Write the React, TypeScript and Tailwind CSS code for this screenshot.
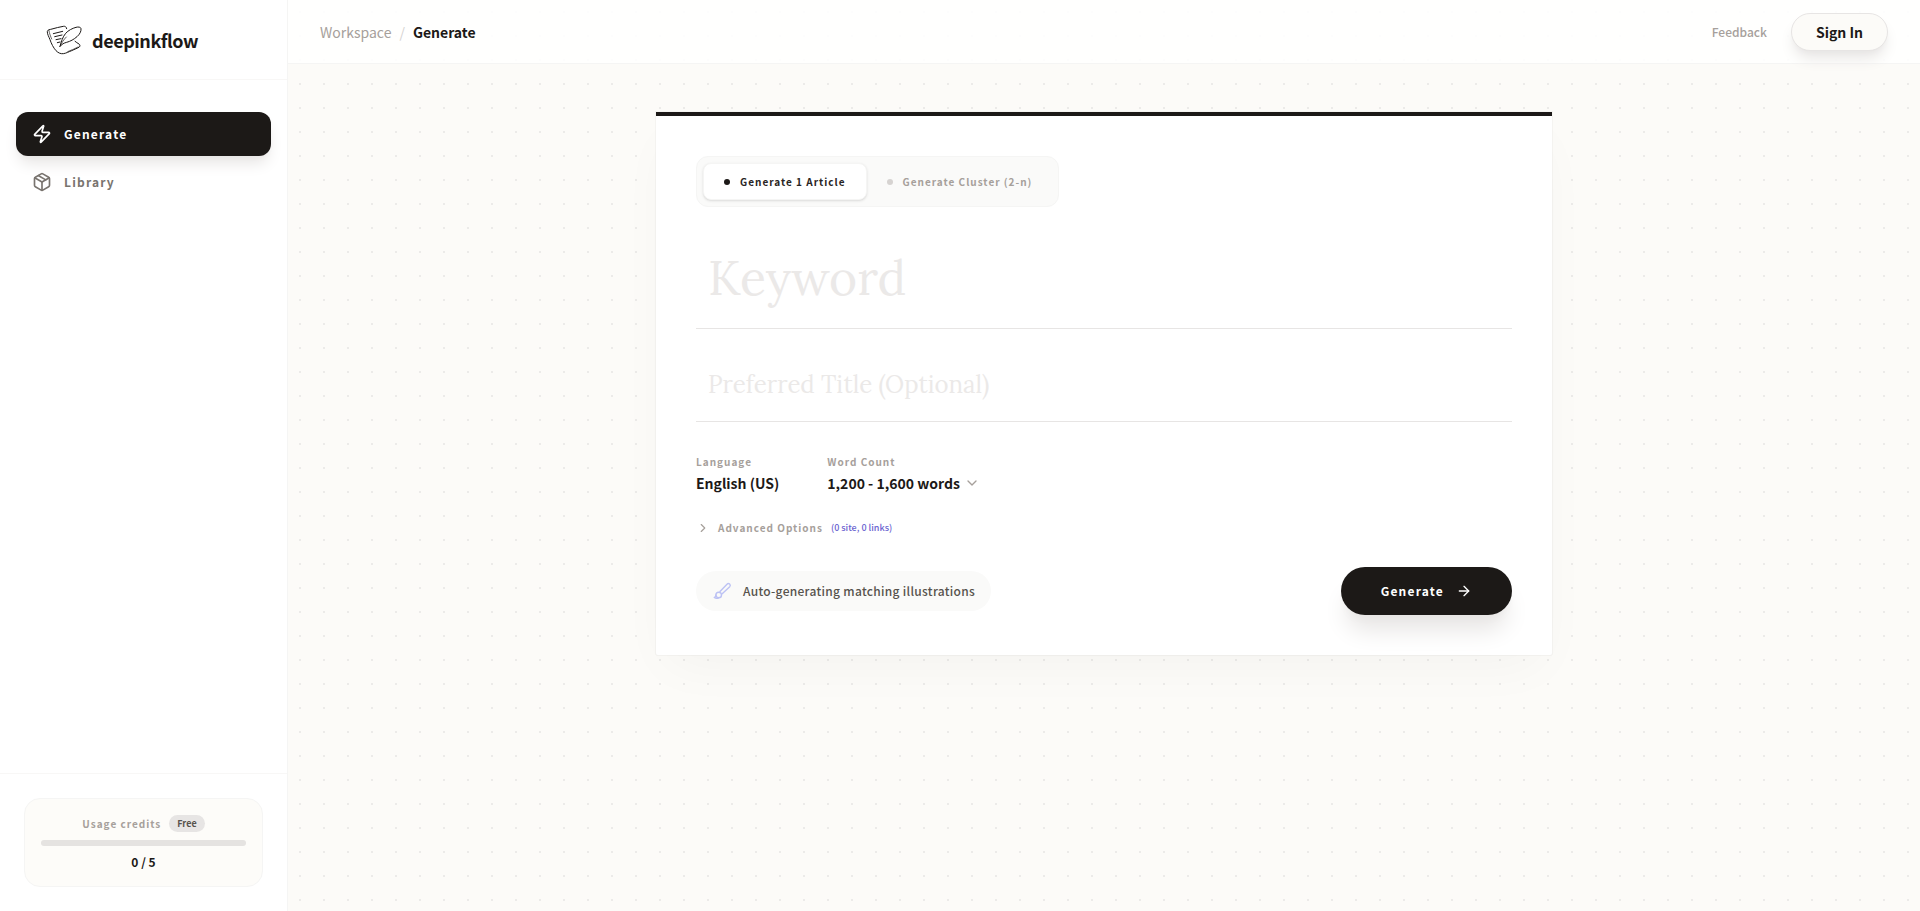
import { useState } from 'react';
import { ArrowRight, ChevronDown, ChevronRight, Package, Zap } from 'lucide-react';

function Logo() {
  return (
    <svg viewBox="132 60 120 120" className="size-10 shrink-0" fill="none" stroke="#1c1917" strokeWidth="3" strokeLinecap="round" strokeLinejoin="round" aria-hidden="true">
      <path d="M200 86c-1-6-5-8-10-7-11 3-24 4-34 8-7 2-13 2-14 7-1 7 5 17 8 25 4 12 10 24 18 33 7 7 14 10 22 9 8-1 17-6 25-9 8-4 17-7 23-11 3-3 2-7-1-9-4-3-9-5-12-8" />
      <path d="M180 139c4-15 8-28 17-39 8-9 20-15 31-18 7-2 14-1 15 4 1 8-4 17-12 24-9 8-20 14-31 17-8 2-14 5-20 12z" />
      <path d="M181 138c4-10 10-19 18-27M147 92c1 9 5 17 8 25M203 155l14-6M220 148l14-7" strokeWidth="2" />
      <path d="M160 101l28-7M164 110l22-5M168 119l15-3M172 128l8-2" />
    </svg>
  );
}

function BrushIcon() {
  return (
    <svg viewBox="0 0 20 20" className="size-5 shrink-0 text-[#bcc2f4]" fill="none" stroke="currentColor" strokeWidth="1.4" strokeLinecap="round" strokeLinejoin="round" aria-hidden="true">
      <path d="M8 10.600 15 3.200a1.800 1.800 0 0 1 2.700 2.500L10.200 12.800" />
      <circle cx="6.700" cy="14" r="2.800" />
      <path d="M3.900 14c0 1.500-.6 2.300-1.600 2.500 1.200.9 2.700 1.100 4.400.3" />
    </svg>
  );
}

function Sidebar() {
  return (
    <aside className="flex w-72 shrink-0 flex-col border-r border-stone-100 bg-white">
      <div className="flex h-20 items-center gap-2 border-b border-[#f8f7f6] px-11">
        <Logo />
        <span className="text-lg font-semibold tracking-tight text-[#1c1917]">deepinkflow</span>
      </div>
      <nav className="flex flex-1 flex-col gap-1 px-4 pt-8">
        <a href="#generate" className="flex h-11 items-center gap-3 rounded-xl bg-[#1c1917] px-4 text-xs font-bold tracking-widest text-white shadow-lg shadow-stone-200">
          <Zap size={20} strokeWidth={2} />
          Generate
        </a>
        <a href="#library" className="flex h-11 items-center gap-3 rounded-xl px-4 text-xs font-bold tracking-widest text-[#79746f]">
          <Package size={20} strokeWidth={2} />
          Library
        </a>
      </nav>
      <div className="border-t border-[#f8f7f6] p-6">
        <div className="flex flex-col items-center rounded-2xl border border-stone-100 bg-[#fdfcf9] p-4">
          <div className="flex items-center gap-2">
            <span className="text-[10px] leading-4 font-bold tracking-widest text-stone-400">Usage credits</span>
            <span className="rounded-full bg-stone-200 px-2 text-[9px] leading-[17px] font-semibold text-stone-600">Free</span>
          </div>
          <div className="mt-2 h-1.5 w-full rounded-full bg-[#e5e3e1]" role="progressbar" aria-label="Usage credits" aria-valuenow={0} aria-valuemax={5} />
          <span className="mt-2 text-xs font-semibold text-[#1c1917]">0 / 5</span>
        </div>
      </div>
    </aside>
  );
}

function Header() {
  return (
    <header className="flex h-16 items-center justify-between border-b border-stone-100 bg-white/90 px-8">
      <div className="flex items-center gap-2 text-sm">
        <a href="#workspace" className="text-stone-400">Workspace</a>
        <span className="text-stone-300">/</span>
        <span className="font-semibold text-[#1c1917]">Generate</span>
      </div>
      <div className="flex items-center gap-6">
        <a href="#feedback" className="text-xs font-medium text-stone-400">Feedback</a>
        <button type="button" className="h-[38px] rounded-full border border-stone-200 bg-[#fcfbf8] px-6 text-sm font-semibold text-[#1c1917] shadow-lg shadow-stone-200">
          Sign In
        </button>
      </div>
    </header>
  );
}

const modes = ['Generate 1 Article', 'Generate Cluster (2-n)'];

function ModeTabs() {
  const [active, setActive] = useState(0);
  return (
    <div className="flex w-fit rounded-xl border border-stone-100 bg-[#fafaf9] p-1.5">
      {modes.map((mode, index) => (
        <button
          key={mode}
          type="button"
          aria-pressed={index === active}
          onClick={() => setActive(index)}
          className={
            index === active
              ? 'flex h-[37px] items-center gap-2.5 rounded-lg border border-stone-100 bg-white px-5 text-[10px] font-bold tracking-widest text-stone-800 shadow-sm'
              : 'flex h-[37px] items-center gap-2.5 rounded-lg px-5 text-[10px] font-bold tracking-widest text-stone-400'
          }
        >
          <span className={index === active ? 'size-1.5 rounded-full bg-[#1c1917]' : 'size-1.5 rounded-full bg-stone-300'} />
          {mode}
        </button>
      ))}
    </div>
  );
}

const labelStyle = 'text-[10px] leading-4 font-bold tracking-widest text-stone-400';
const selectStyle = 'field-sizing-content appearance-none bg-transparent text-sm leading-6 font-semibold text-[#1c1917]';

function GenerateForm() {
  return (
    <form
      className="mx-auto w-full max-w-4xl rounded-b-xs border-t-4 border-[#1c1917] bg-white p-10 shadow-[0_0_0_1px_rgba(28,25,23,0.03),0_20px_50px_-12px_rgba(28,25,23,0.04)]"
      onSubmit={(event) => event.preventDefault()}
    >
      <ModeTabs />
      <input
        aria-label="Keyword"
        placeholder="Keyword"
        className="mt-8 block h-[90px] w-full border-b border-stone-200 px-3 pb-3 font-['Lora','Liberation_Serif',serif] text-5xl text-[#1c1917] outline-none placeholder:text-[#ebe9e8]"
      />
      <input
        aria-label="Preferred Title (Optional)"
        placeholder="Preferred Title (Optional)"
        className="mt-5 block h-[73px] w-full border-b border-stone-200 px-3 pb-0.5 font-['Lora','Liberation_Serif',serif] text-2xl text-[#1c1917] outline-none placeholder:text-[#ebe9e8]"
      />
      <div className="mt-8 flex gap-12">
        <div className="flex flex-col gap-px">
          <label htmlFor="language" className={labelStyle}>Language</label>
          <select id="language" className={selectStyle}>
            <option>English (US)</option>
          </select>
        </div>
        <div className="flex flex-col gap-px">
          <label htmlFor="words" className={labelStyle}>Word Count</label>
          <div className="flex items-center gap-1">
            <select id="words" className={selectStyle}>
              <option>1,200 - 1,600 words</option>
            </select>
            <ChevronDown size={16} className="text-stone-400" />
          </div>
        </div>
      </div>
      <button type="button" className="mt-6 flex items-center gap-2 text-[10px] leading-[18px] font-bold tracking-widest text-stone-400">
        <ChevronRight size={14} />
        Advanced Options
        <span className="text-[9px] font-medium tracking-normal text-[#6a63d0]">(0 site, 0 links)</span>
      </button>
      <div className="mt-[30px] flex items-center justify-between">
        <div className="flex h-10 items-center gap-[11px] rounded-full bg-[#fafaf9] px-4 text-xs font-medium tracking-wide text-stone-600">
          <BrushIcon />
          Auto-generating matching illustrations
        </div>
        <button type="submit" className="flex h-12 items-center gap-3 rounded-full bg-[#1c1917] px-10 text-xs font-bold tracking-widest text-white shadow-xl shadow-stone-200">
          Generate
          <ArrowRight size={16} />
        </button>
      </div>
    </form>
  );
}

export default function App() {
  return (
    <div className="flex min-h-screen bg-[#fcfbf8] font-['Noto_Sans_CJK_SC',sans-serif]">
      <Sidebar />
      <div className="flex min-w-0 flex-1 flex-col bg-[radial-gradient(#ecebe9_1px,transparent_1px)] bg-size-[24px_24px]">
        <Header />
        <main className="flex-1 px-8 py-12">
          <GenerateForm />
        </main>
      </div>
    </div>
  );
}
